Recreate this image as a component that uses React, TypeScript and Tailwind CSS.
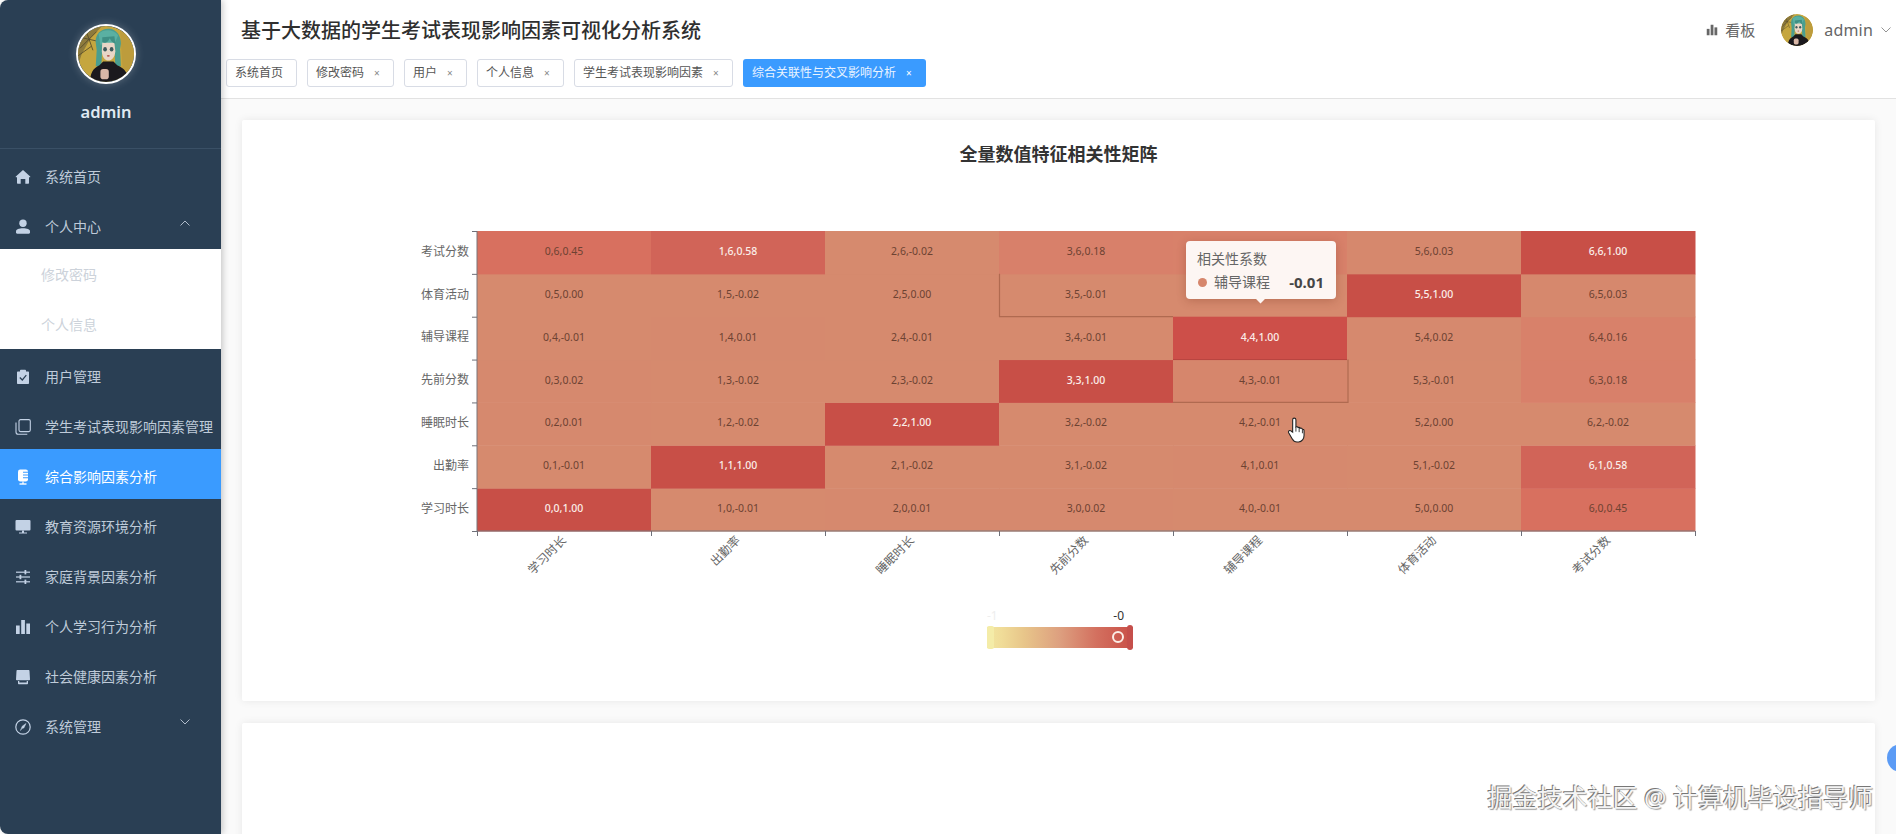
import React from "react";

function Avatar({ id }: { id: string }) {
  return (
    <svg viewBox="0 0 60 60" className="block w-full h-full">
      <defs>
        <clipPath id={id}>
          <circle cx="30" cy="30" r="30" />
        </clipPath>
      </defs>
      <g clipPath={`url(#${id})`}>
        <rect width="60" height="60" fill="#c5a63f" />
        <path d="M0 0h26L14 12 4 30 0 42z" fill="#8d7a3c" />
        <path d="M2 24 20 6M9 6l7 20M2 12l22 5M0 32l14-10" stroke="#54492a" strokeWidth="0.900" fill="none" />
        <path d="M45 4h15v44H48z" fill="#bd9c3c" />
        <path d="M19 18C18 8 26 2 34 3c8 1 12 8 12 16l-1 6 1 18h-6l-1-20-13 0-1 20h-6l1-17z" fill="#4a9e90" />
        <path d="M22 8c6-5 16-5 21 2l-4 9-15 1z" fill="#5ab0a2" />
        <path d="M26 18h13l1 9c-.5 7-4 10-7.500 10S26 34 25.500 27z" fill="#e9d6c6" />
        <path d="M26 17c3 3 7-1 8-4 1 2 3 5 6 6l-1-8-13 1z" fill="#3f8f84" />
        <ellipse cx="29" cy="25" rx="2" ry="2.400" fill="#3e5a5c" />
        <ellipse cx="36" cy="25" rx="2" ry="2.400" fill="#3e5a5c" />
        <ellipse cx="32.500" cy="32" rx="1.600" ry="1" fill="#b5574f" />
        <path d="M13 60c0-9 3-15 10-18l4-4h11l4 4c8 3 12 9 12 18z" fill="#1b191d" />
        <rect x="24" y="46" width="9" height="11" rx="3" fill="#d9b7a7" />
      </g>
    </svg>
  );
}

const ic = "w-[16px] h-[16px] block";

const Home = () => (
  <svg viewBox="0 0 16 16" className={ic} fill="currentColor">
    <path d="M8 1 .8 7.600c-.3.300-.1.700.3.700h.9V14c0 .4.300.7.700.7h3V10h4.600v4.700h3c.4 0 .7-.3.700-.7V8.300h.9c.4 0 .6-.4.300-.7z" />
  </svg>
);
const UserI = () => (
  <svg viewBox="0 0 16 16" className={ic} fill="currentColor">
    <circle cx="8" cy="4.300" r="3.700" />
    <path d="M1 12.300C1 10.300 4 9.300 8 9.300s7 1 7 3v1.200c0 .7-.5 1.200-1.200 1.200H2.200c-.7 0-1.200-.5-1.200-1.200z" />
  </svg>
);
const Clip = () => (
  <svg viewBox="0 0 16 16" className={ic}>
    <path fill="currentColor" d="M5 1.500c0-.5.400-.8.800-.8h4.400c.4 0 .8.300.8.800V2.500h2c.6 0 1 .4 1 1V14c0 .6-.4 1-1 1H3c-.6 0-1-.4-1-1V3.500c0-.6.400-1 1-1h2z" />
    <path d="M4.800 8.500 7.300 11l4-4.800" stroke="#2a3f54" strokeWidth="1.200" fill="none" />
  </svg>
);
const Copy = () => (
  <svg viewBox="0 0 16 16" className={ic} fill="none" stroke="currentColor" strokeWidth="1.100">
    <rect x="4" y="0.600" width="11.300" height="12" rx="1.500" />
    <path d="M1 3.500v9.500c0 1.300 1 2.300 2.300 2.300h9" />
  </svg>
);
const Mic = () => (
  <svg viewBox="0 0 16 16" className={ic}>
    <rect x="3" y="0.500" width="10" height="12" rx="2.200" fill="currentColor" />
    <path d="M8 3.200h5M8 6h5M8 8.800h5" stroke="#3a9bff" strokeWidth="1.100" />
    <path d="M4.500 15h7" stroke="currentColor" strokeWidth="1.400" />
    <path d="M8 12.500V15" stroke="currentColor" strokeWidth="1.200" />
  </svg>
);
const Monitor = () => (
  <svg viewBox="0 0 16 16" className={ic} fill="currentColor">
    <rect x="0.500" y="1" width="15" height="10.500" rx="1" />
    <path d="M7 11.500h2v2H7zM4 13.500h8v1H4z" />
  </svg>
);
const Sliders = () => (
  <svg viewBox="0 0 16 16" className={ic} fill="currentColor">
    <rect x="1" y="2.600" width="14" height="1.200" />
    <rect x="1" y="7.400" width="14" height="1.200" />
    <rect x="1" y="12.200" width="14" height="1.200" />
    <rect x="9.500" y="1" width="1.800" height="4.400" />
    <rect x="4.500" y="5.800" width="1.800" height="4.400" />
    <rect x="9.500" y="10.600" width="1.800" height="4.400" />
  </svg>
);
const Bars = ({ c = ic }: { c?: string }) => (
  <svg viewBox="0 0 16 16" className={c} fill="currentColor">
    <rect x="1" y="6.500" width="3.700" height="8.500" />
    <rect x="6.200" y="1" width="3.700" height="14" />
    <rect x="11.300" y="4.500" width="3.700" height="10.500" />
  </svg>
);
const Store = () => (
  <svg viewBox="0 0 16 16" className={ic}>
    <path fill="currentColor" d="M2.500 1h11c.6 0 1 .3 1 1l.5 8.500c0 .5-.3.8-.8.8H1.800c-.5 0-.8-.3-.8-.8L1.500 2c0-.7.400-1 1-1z" />
    <path fill="currentColor" d="M3 12h1.300v1.200c0 .3.200.4.400.4h6.600c.2 0 .4-.1.400-.4V12H13v2.200c0 .6-.4 1-1 1H4c-.6 0-1-.4-1-1z" />
  </svg>
);
const Compass = () => (
  <svg viewBox="0 0 16 16" className={ic} fill="none" stroke="currentColor">
    <circle cx="8" cy="8" r="7.200" strokeWidth="1.200" />
    <path d="M11 4.500 8.900 8.900 6.800 9.500 5.500 11.500 7.200 7.200z" fill="currentColor" strokeWidth="0.500" />
  </svg>
);
const Chevron = ({ up }: { up?: boolean }) => (
  <svg viewBox="0 0 10 6" className="w-[10px] h-[6px] block" fill="none" stroke="currentColor" strokeWidth="0.900">
    <path d={up ? "M.5 5.500 5 1l4.500 4.500" : "M.5.500 5 5 9.500.500"} />
  </svg>
);

type Item = { label: string; icon: React.ReactNode; chev?: "up" | "down"; active?: boolean };

function Row({ label, icon, chev, active }: Item) {
  return (
    <div
      className={
        active
          ? "h-[50px] flex items-center pt-[6px] pl-[15px] bg-[#3a9bff] text-white relative"
          : "h-[50px] flex items-center pt-[6px] pl-[15px] text-[#bfcbd9] relative"
      }
    >
      <span className={active ? "w-[30px] shrink-0 text-white" : "w-[30px] shrink-0 text-[#c3d2e5]"}>{icon}</span>
      <span className="text-[14px] leading-[20px] whitespace-nowrap">{label}</span>
      {chev === "up" && (
        <span className="absolute left-[180px] top-[21px] text-[#bfcbd9]">
          <Chevron up />
        </span>
      )}
      {chev === "down" && (
        <span className="absolute left-[180px] top-[20px] text-[#bfcbd9]">
          <Chevron />
        </span>
      )}
    </div>
  );
}

const tags = [
  { t: "修改密码", close: true },
  { t: "用户", close: true },
  { t: "个人信息", close: true },
  { t: "学生考试表现影响因素", close: true },
];

const xs = ["学习时长", "出勤率", "睡眠时长", "先前分数", "辅导课程", "体育活动", "考试分数"];
const matrix: number[][] = [
  [1.0, -0.01, 0.01, 0.02, -0.01, 0.0, 0.45],
  [-0.01, 1.0, -0.02, -0.02, 0.01, -0.02, 0.58],
  [0.01, -0.02, 1.0, -0.02, -0.01, 0.0, -0.02],
  [0.02, -0.02, -0.02, 1.0, -0.01, -0.01, 0.18],
  [-0.01, 0.01, -0.01, -0.01, 1.0, -0.01, 0.16],
  [0.0, -0.02, 0.0, -0.01, 0.02, 1.0, 0.03],
  [0.45, 0.58, -0.02, 0.18, 0.16, 0.03, 1.0],
];

const stops: [number, number[]][] = [
  [0, [214, 138, 110]],
  [0.18, [216, 128, 106]],
  [0.45, [216, 112, 95]],
  [0.58, [209, 100, 88]],
  [1, [200, 79, 71]],
];
function color(v: number) {
  const x = Math.max(0, v);
  for (let i = 1; i < stops.length; i++) {
    if (x <= stops[i][0]) {
      const [a, ca] = stops[i - 1];
      const [b, cb] = stops[i];
      const t = (x - a) / (b - a);
      return `rgb(${ca.map((c, k) => Math.round(c + (cb[k] - c) * t)).join(",")})`;
    }
  }
  return "rgb(200,79,71)";
}

const L = 235;
const T = 21;
const CW = 174;
const CH = 300 / 7;
const B = T + 300;

function Heatmap() {
  const cells: React.ReactNode[] = [];
  for (let x = 0; x < 7; x++) {
    for (let y = 0; y < 7; y++) {
      const v = matrix[x][y];
      const px = L + x * CW;
      const py = B - (y + 1) * CH;
      cells.push(<rect key={`r${x}-${y}`} x={px} y={py} width={CW + 0.5} height={CH + 0.5} fill={color(v)} />);
    }
  }
  const labels: React.ReactNode[] = [];
  for (let x = 0; x < 7; x++) {
    for (let y = 0; y < 7; y++) {
      if (x === 4 && y >= 5) continue; // these two labels are hidden by the tooltip
      const v = matrix[x][y];
      const white = v >= 0.5;
      labels.push(
        <text
          key={`t${x}-${y}`}
          x={L + (x + 0.5) * CW}
          y={B - (y + 0.5) * CH - 0.2}
          textAnchor="middle"
          dominantBaseline="middle"
          fontSize="10.500"
          fill={white ? "#fbeee9" : "#6d4232"}
          fontWeight={white ? 500 : 400}
        >
          {`${x},${y},${v.toFixed(2)}`}
        </text>
      );
    }
  }
  const x3 = L + 3 * CW;
  const x4 = L + 4 * CW;
  const x5 = L + 5 * CW;
  const y5b = B - 5 * CH;
  const y3t = B - 4 * CH;
  const y3b = B - 3 * CH;
  return (
    <svg viewBox="0 0 1633 380" className="block w-[1633px] h-[380px] shrink-0">
      {cells}
      <rect x={x4} y={y3t} width={CW} height={CH} fill="#d6866c" />
      <rect x={x4} y={B - 5 * CH} width={CW} height={CH} fill="#cd4f49" />
      <path d={`M${x3 + 0.5} ${B - 6 * CH}V${y5b}H${x4}`} stroke="#b06a50" fill="none" strokeWidth="1.200" />
      <path d={`M${x4} ${y3b}H${x5 + 1}V${y3t}`} stroke="#b06a50" fill="none" strokeWidth="1.200" />
      <path d={`M${x4} ${y3t}H${x5}`} stroke="#b8453f" fill="none" strokeWidth="1" />
      {labels}
      <path d={`M${L} ${T}V${B}H${L + 7 * CW}`} stroke="#7a7479" fill="none" />
      {xs.map((_, i) => (
        <path key={i} d={`M${L - 5} ${T + i * CH + 0.5}H${L}`} stroke="#6e7079" />
      ))}
      <path d={`M${L - 5} ${B + 0.5}H${L}`} stroke="#6e7079" />
      {[0, 1, 2, 3, 4, 5, 6, 7].map((i) => (
        <path key={i} d={`M${L + i * CW + 0.5} ${B}V${B + 5}`} stroke="#6e7079" />
      ))}
      {xs.map((s, i) => (
        <text
          key={s}
          x={L - 8}
          y={B - (i + 0.5) * CH}
          textAnchor="end"
          dominantBaseline="middle"
          fontSize="12"
          fill="#666"
        >
          {s}
        </text>
      ))}
      {xs.map((s, i) => {
        const cx = L + (i + 0.5) * CW + 3;
        const cy = B + 10;
        return (
          <text key={s} x={cx} y={cy} textAnchor="end" fontSize="12" fill="#666" transform={`rotate(-45 ${cx} ${cy})`}>
            {s}
          </text>
        );
      })}
    </svg>
  );
}

export default function App() {
  return (
    <div className="w-[1896px] h-[834px] overflow-hidden flex bg-white [font-family:'Noto_Sans','Noto_Sans_CJK_SC',sans-serif]">
      <aside className="w-[221px] shrink-0 h-full bg-[#2a3f54] rounded-l-[8px] flex flex-col shadow-[2px_0_6px_rgba(0,0,0,0.2)] relative z-10">
        <div className="h-[149px] shrink-0 border-b border-[#3a5066] flex flex-col items-center pr-[9px]">
          <div className="mt-[24px] w-[60px] h-[60px] rounded-full border-2 border-white overflow-hidden shadow-[0_0_8px_rgba(255,255,255,0.25)]">
            <Avatar id="av1" />
          </div>
          <div className="mt-[16px] text-[16.500px] leading-[24px] font-semibold text-[#dfe9f2]">admin</div>
        </div>
        <Row label="系统首页" icon={<Home />} />
        <Row label="个人中心" icon={<UserI />} chev="up" />
        <div className="bg-white">
          <div className="h-[50px] flex items-center pt-[1px] pl-[41px] text-[14px] text-[#ccd2da]">修改密码</div>
          <div className="h-[50px] flex items-center pt-[1px] pl-[41px] text-[14px] text-[#ccd2da]">个人信息</div>
        </div>
        <Row label="用户管理" icon={<Clip />} />
        <Row label="学生考试表现影响因素管理" icon={<Copy />} />
        <Row label="综合影响因素分析" icon={<Mic />} active />
        <Row label="教育资源环境分析" icon={<Monitor />} />
        <Row label="家庭背景因素分析" icon={<Sliders />} />
        <Row label="个人学习行为分析" icon={<Bars />} />
        <Row label="社会健康因素分析" icon={<Store />} />
        <Row label="系统管理" icon={<Compass />} chev="down" />
      </aside>

      <div className="flex-1 min-w-0 h-full flex flex-col bg-[#fafafa] relative">
        <header className="h-[99px] shrink-0 bg-white border-b border-[#e2e2e2] flex flex-col">
          <div className="h-[59px] shrink-0 flex items-center justify-between pl-[20px] pr-[5px]">
            <div className="text-[20px] leading-[28px] font-medium text-[#2f2f2f] mt-[3px]">基于大数据的学生考试表现影响因素可视化分析系统</div>
            <div className="flex items-center text-[#666]">
              <span className="w-[12px] h-[12px] mr-[7px]">
                <Bars c="w-[12px] h-[12px] block" />
              </span>
              <span className="text-[15px] leading-[20px]">看板</span>
              <div className="ml-[26px] w-[32px] h-[32px] rounded-full overflow-hidden">
                <Avatar id="av2" />
              </div>
              <span className="ml-[11px] text-[16px] leading-[20px] tracking-[0.2px]">admin</span>
              <span className="ml-[8px] text-[#888]">
                <Chevron />
              </span>
            </div>
          </div>
          <div className="flex items-start gap-[10px] pl-[5px]">
            <div className="h-[28px] w-[71px] flex items-center pl-[8px] border border-[#d8dce5] rounded-[3px] bg-white text-[12px] text-[#555] whitespace-nowrap">
              系统首页
            </div>
            {tags.map((g) => (
              <div
                key={g.t}
                className="h-[28px] flex items-center border border-[#d8dce5] rounded-[3px] bg-white pl-[8px] text-[12px] text-[#555] whitespace-nowrap"
              >
                <span>{g.t}</span>
                <span className="ml-[10px] mr-[13px] w-[6px] text-[10px] text-[#888] leading-none">×</span>
              </div>
            ))}
            <div className="h-[28px] flex items-center rounded-[3px] bg-[#3a9bff] pl-[9px] text-[12px] text-[#eaf4ff] whitespace-nowrap">
              <span>综合关联性与交叉影响分析</span>
              <span className="ml-[10px] mr-[14px] w-[6px] text-[10px] leading-none text-white">×</span>
            </div>
          </div>
        </header>

        <main className="flex-1 min-h-0 overflow-hidden pt-[21px] px-[21px] flex flex-col gap-[22px]">
          <section className="h-[581px] shrink-0 bg-white rounded-[2px] shadow-[0_0_8px_rgba(0,0,0,0.08)] flex flex-col relative">
            <div className="h-[90px] shrink-0 pt-[20px] text-center text-[18px] leading-[28px] font-bold text-[#333]">全量数值特征相关性矩阵</div>
            <Heatmap />
            <div className="w-[146px] ml-[745px] mt-[15px] shrink-0">
              <div className="h-[22px] flex items-center justify-between text-[12px] leading-[16px]">
                <span className="text-[#eeeeee]">-1</span>
                <span className="text-[#333] mr-[9px]">-0</span>
              </div>
              <div className="h-[21px] relative bg-[linear-gradient(90deg,#f2e6a0_0%,#f0dc98_10%,#e8c68a_25%,#dd9f7f_50%,#d3705f_75%,#c94f47_100%)]">
                <div className="absolute left-0 top-[-1px] w-[7px] h-[23px] bg-[#f4eca8] rounded-[2px]" />
                <div className="absolute right-0 top-[-2px] w-[6px] h-[25px] bg-[#c54f4b] rounded-[3px]" />
                <div className="absolute left-[125px] top-[4px] w-[12px] h-[12px] rounded-full border-2 border-[#fbeee6]" />
              </div>
            </div>

            <div className="absolute left-[944px] top-[121px] w-[150px] h-[58px] bg-[#fdf6f3] rounded-[4px] shadow-[0_2px_10px_rgba(120,50,30,0.3)] px-[11px] pt-[8px] text-[14px] text-[#666]">
              <div className="leading-[20px]">相关性系数</div>
              <div className="flex items-center mt-[3px] leading-[20px]">
                <span className="w-[9px] h-[9px] rounded-full bg-[#d6866c] mr-[7px] ml-[1px]" />
                <span>辅导课程</span>
                <span className="ml-auto font-bold text-[15px] text-[#464646] mr-[1px]">-0.01</span>
              </div>
              <div className="absolute left-[71px] bottom-[-3px] w-[7px] h-[7px] rotate-45 bg-[#fdf6f3]" />
            </div>

            <svg viewBox="0 0 18 24" className="absolute left-[1045px] top-[297px] w-[20px] h-[26px]">
              <path
                d="M5 11V2.500C5 1.500 5.700 1 6.400 1S8 1.500 8 2.500V9l.3-.3c1 0 1.500.4 1.700 1 .8-.3 1.600 0 1.900.7.800-.3 1.800 0 2.100.9.800-.1 1.500.4 1.500 1.300V17c0 3-2 6-5 6H9c-2 0-3.400-1-4.500-3L1.300 14.500c-.5-1 .2-2 1-2 .9 0 1.500.6 2.700 1.500z"
                fill="#fff"
                stroke="#222"
                strokeWidth="1"
              />
              <path d="M8 9v4.500M11 10v4M14 11.500V15" stroke="#222" strokeWidth="0.800" />
            </svg>
          </section>
          <section className="flex-1 shrink-0 min-h-[120px] bg-white rounded-[2px] shadow-[0_0_8px_rgba(0,0,0,0.08)]" />
        </main>

        <div className="absolute left-[1666px] top-[744px] w-[28px] h-[28px] rounded-full bg-[#5b9bf5]" />
        <div className="absolute right-[23px] top-[782px] text-[25px] leading-[30px] whitespace-nowrap text-[#f4f4f4] [text-shadow:-1px_-1px_0_#777,1px_1px_1px_#999]">
          掘金技术社区 @ 计算机毕设指导师
        </div>
      </div>
    </div>
  );
}
